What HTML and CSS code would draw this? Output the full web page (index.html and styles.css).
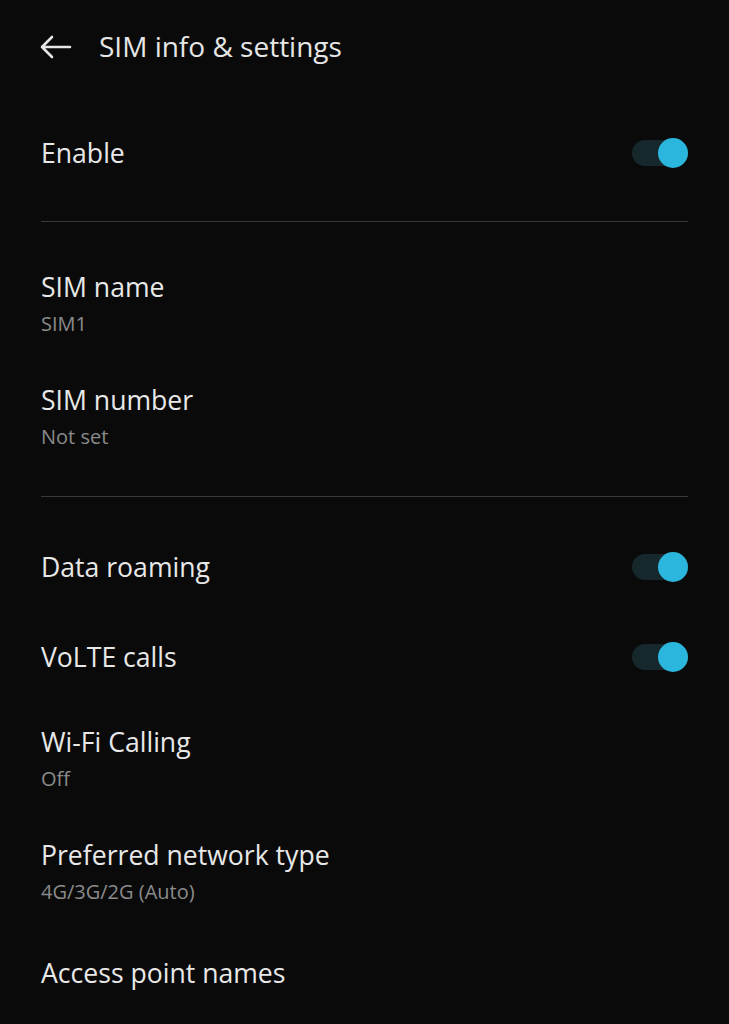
FILE: index.html
```html
<!DOCTYPE html>
<html lang="en">
<head>
<meta charset="utf-8">
<title>SIM info &amp; settings</title>
<link rel="stylesheet" href="styles.css">
</head>
<body>
<div class="screen">
  <header class="topbar">
    <svg class="back" width="32" height="24" viewBox="0 0 32 24" aria-hidden="true">
      <path d="M2 12 H30 M12 2 L2 12 L12 22" fill="none" stroke="#e6e6e6" stroke-width="2.6" stroke-linecap="round" stroke-linejoin="round"/>
    </svg>
    <h1 class="title">SIM info &amp; settings</h1>
  </header>

  <section class="group first">
    <div class="row single">
      <span class="label">Enable</span>
      <span class="toggle on"><span class="knob"></span></span>
    </div>
  </section>
  <div class="divider"></div>

  <section class="group">
    <div class="row double">
      <span class="label">SIM name</span>
      <span class="sub">SIM1</span>
    </div>
    <div class="row double">
      <span class="label">SIM number</span>
      <span class="sub">Not set</span>
    </div>
  </section>
  <div class="divider"></div>

  <section class="group">
    <div class="row single">
      <span class="label">Data roaming</span>
      <span class="toggle on"><span class="knob"></span></span>
    </div>
    <div class="row single">
      <span class="label">VoLTE calls</span>
      <span class="toggle on"><span class="knob"></span></span>
    </div>
    <div class="row double">
      <span class="label">Wi-Fi Calling</span>
      <span class="sub">Off</span>
    </div>
    <div class="row double">
      <span class="label">Preferred network type</span>
      <span class="sub">4G/3G/2G (Auto)</span>
    </div>
    <div class="row single">
      <span class="label">Access point names</span>
    </div>
  </section>
</div>
</body>
</html>
```

FILE: styles.css
```css
html, body {
  margin: 0;
  padding: 0;
  background: #0a0a0a;
}
body {
  font-family: "Open Sans", "Noto Sans", sans-serif;
  color: #e8e8e8;
  width: 729px;
  height: 1024px;
  overflow: hidden;
}
.screen {
  padding: 0 41px;
}
.topbar {
  height: 94px;
  display: flex;
  align-items: center;
  gap: 27px;
}
.back {
  display: block;
  margin-left: -1px;
}
.title {
  margin: 0;
  font-size: 28px;
  font-weight: 400;
  color: #e6e6e6;
  line-height: 34px;
  margin-top: -2px;
}
.group {
  display: flex;
  flex-direction: column;
  padding-top: 25px;
}
.group.first {
  padding-top: 14px;
}
.row {
  display: flex;
}
.row.single {
  height: 90px;
  align-items: center;
  justify-content: space-between;
}
.row.double {
  flex-direction: column;
  padding: 23px 0 24px;
}
.label {
  font-size: 26.6px;
  line-height: 34px;
  color: #e8e8e8;
}
.sub {
  margin-top: 8px;
  font-size: 20px;
  line-height: 24px;
  color: #8a8a8a;
}
.divider {
  height: 1px;
  background: #3a3a3a;
  margin-top: 19px;
}
.group + .divider {
  margin-top: 23px;
}
.toggle {
  position: relative;
  width: 56px;
  height: 26px;
  border-radius: 13px;
  background: #17282d;
}
.toggle .knob {
  position: absolute;
  right: 0;
  top: -2px;
  width: 30px;
  height: 30px;
  border-radius: 50%;
  background: #2bb6de;
}
```
